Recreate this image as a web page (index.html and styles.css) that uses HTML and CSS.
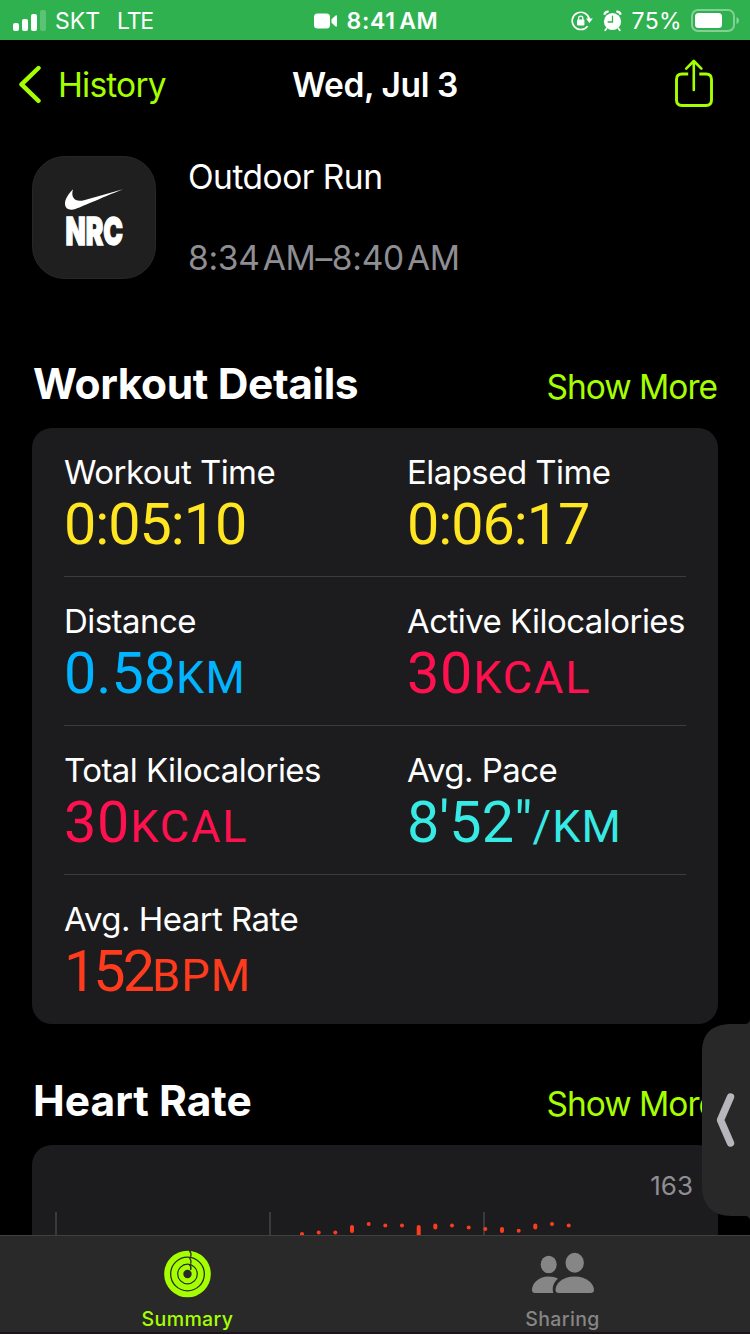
FILE: index.html
```html
<!DOCTYPE html>
<html lang="en">
<head>
  <meta charset="UTF-8">
  <meta name="viewport" content="width=device-width, initial-scale=1.0">
  <title>Workout Summary</title>
  <link rel="stylesheet" href="styles.css">
</head>
<body>
  <div class="status-bar">
    <div class="status-left">
      <svg class="signal" width="34" height="22" viewBox="0 0 34 22" fill="#fff">
        <rect x="0" y="13" width="6" height="8" rx="2"/>
        <rect x="9" y="9" width="6" height="12" rx="2"/>
        <rect x="18" y="4" width="6" height="17" rx="2"/>
        <rect x="27" y="0" width="6" height="21" rx="2" opacity="0.22"/>
      </svg>
      <span class="carrier">SKT</span>
      <span class="network">LTE</span>
    </div>
    <div class="status-center">
      <svg width="24" height="16" viewBox="0 0 24 16" fill="#fff">
        <rect x="0" y="0.5" width="16" height="15" rx="3.5"/>
        <path d="M17.5 6.2 L21.6 2.6 Q23 1.6 23 3.4 V12.6 Q23 14.4 21.6 13.4 L17.5 9.8 Z"/>
      </svg>
      <span class="clock">8:41 AM</span>
    </div>
    <div class="status-right">
      <svg class="lock" width="22" height="22" viewBox="0 0 22 22" fill="none">
        <path d="M18.3 9.4 A8.6 8.6 0 1 0 16.6 16.2" stroke="#fff" stroke-width="1.7"/>
        <path d="M15 8.6 H21.8 L18.4 12.9 Z" fill="#fff"/>
        <rect x="6" y="9.6" width="7.4" height="6" rx="1" fill="#fff"/>
        <path d="M7.6 10 V8.2 a2.1 2.1 0 0 1 4.2 0 V10" stroke="#fff" stroke-width="1.3"/>
      </svg>
      <svg class="alarm" width="20" height="22" viewBox="0 0 20 22">
        <circle cx="9.5" cy="11.5" r="8.6" fill="#fff"/>
        <path d="M1.6 4.8 A3 3 0 0 1 5.6 1.9" stroke="#fff" stroke-width="2.4" fill="none"/>
        <path d="M13.4 1.9 A3 3 0 0 1 17.4 4.8" stroke="#fff" stroke-width="2.4" fill="none"/>
        <path d="M3.5 18.5 L2.2 20.2 M15.5 18.5 L16.8 20.2" stroke="#fff" stroke-width="1.8" stroke-linecap="round"/>
        <path d="M9.5 6.2 V12 H5.2" stroke="#2fb14f" stroke-width="1.3" fill="none" stroke-linecap="round"/>
      </svg>
      <span class="percent">75%</span>
      <svg class="battery" width="49" height="24" viewBox="0 0 49 24">
        <rect x="1" y="1" width="42" height="21" rx="6" fill="none" stroke="#fff" stroke-width="2" opacity="0.4"/>
        <rect x="4" y="4" width="27" height="15" rx="3.5" fill="#fff"/>
        <path d="M45.5 8 Q48 9 48 11.5 Q48 14 45.5 15 Z" fill="#fff" opacity="0.45"/>
      </svg>
    </div>
  </div>

  <div class="nav">
    <div class="back">
      <svg width="23" height="39" viewBox="0 0 23 39" fill="none" stroke="#a6ff00" stroke-width="4.4" stroke-linecap="round" stroke-linejoin="round">
        <path d="M20.5 3 L3.5 19.4 L20.5 35.8"/>
      </svg>
      <span>History</span>
    </div>
    <h1>Wed, Jul 3</h1>
    <svg class="share" width="38" height="49" viewBox="0 0 38 49" fill="none" stroke="#a6ff00" stroke-width="2.9">
      <path d="M13.2 15 H7 Q1.5 15 1.5 20.5 V41 Q1.5 46.5 7 46.5 H31 Q36.5 46.5 36.5 41 V20.5 Q36.5 15 31 15 H24.3"/>
      <path d="M18.8 31 V2.2 M11.2 9.6 L18.8 2 L26.4 9.6" stroke-width="2.6" stroke-linecap="round" stroke-linejoin="round"/>
    </svg>
  </div>

  <div class="workout">
    <svg class="app-icon" width="124" height="123" viewBox="0 0 124 123">
      <rect x="0.5" y="0.5" width="123" height="122" rx="32" fill="#1f1f1f" stroke="#272727"/>
      <path d="M41 33.3 C36.5 38 33 43 33 47.5 C33 53 37.5 54.8 43.5 53 C48 51.6 68 42.5 91 33.3 L52 44.2 C43 46.5 38.5 41.5 41 33.3 Z" fill="#fff"/>
      <text class="app-name" x="33.5" y="89.3" textLength="57.5" lengthAdjust="spacingAndGlyphs">NRC</text>
    </svg>
    <div class="workout-info">
      <div class="workout-name">Outdoor Run</div>
      <div class="workout-time">8:34 AM–8:40 AM</div>
    </div>
  </div>

  <div class="section-head">
    <h2>Workout Details</h2>
    <a class="show-more">Show More</a>
  </div>
  <div class="card details">
    <div class="row">
      <div class="stat">
        <div class="label">Workout Time</div>
        <div class="value yellow">0:05:10</div>
      </div>
      <div class="stat">
        <div class="label">Elapsed Time</div>
        <div class="value yellow">0:06:17</div>
      </div>
    </div>
    <div class="row">
      <div class="stat">
        <div class="label">Distance</div>
        <div class="value blue">0.58<span class="unit">KM</span></div>
      </div>
      <div class="stat">
        <div class="label">Active Kilocalories</div>
        <div class="value pink">30<span class="unit">KCAL</span></div>
      </div>
    </div>
    <div class="row">
      <div class="stat">
        <div class="label">Total Kilocalories</div>
        <div class="value pink">30<span class="unit">KCAL</span></div>
      </div>
      <div class="stat">
        <div class="label">Avg. Pace</div>
        <div class="value cyan">8'52"<span class="unit">/KM</span></div>
      </div>
    </div>
    <div class="row">
      <div class="stat">
        <div class="label">Avg. Heart Rate</div>
        <div class="value red">152<span class="unit">BPM</span></div>
      </div>
    </div>
  </div>

  <div class="section-head second">
    <h2>Heart Rate</h2>
    <a class="show-more">Show More</a>
  </div>
  <div class="card chart">
    <div class="chart-max">163</div>
    <svg width="686" height="24" viewBox="0 0 686 24">
      <g fill="#3a3a3c">
        <rect x="23" y="0" width="2" height="24"/>
        <rect x="237" y="0" width="2" height="24"/>
        <rect x="451" y="0" width="2" height="24"/>
      </g>
      <g fill="#ff3b1d">
        <rect x="268" y="20" width="4" height="6" rx="2"/>
        <rect x="284.7" y="18.5" width="4" height="4" rx="2"/>
        <rect x="301.3" y="18.5" width="4" height="4" rx="2"/>
        <rect x="318" y="13" width="4" height="8" rx="2"/>
        <rect x="334.7" y="10" width="4" height="4" rx="2"/>
        <rect x="351.3" y="11.6" width="4" height="4" rx="2"/>
        <rect x="368" y="11.6" width="4" height="4" rx="2"/>
        <rect x="384.7" y="13" width="4" height="14" rx="2"/>
        <rect x="401.3" y="11.6" width="4" height="6" rx="2"/>
        <rect x="418" y="11.6" width="4" height="4" rx="2"/>
        <rect x="434.7" y="13.4" width="4" height="4" rx="2"/>
        <rect x="451.3" y="15" width="4" height="4" rx="2"/>
        <rect x="468" y="15" width="4" height="6" rx="2"/>
        <rect x="484.7" y="16.7" width="4" height="4" rx="2"/>
        <rect x="501.3" y="11.6" width="4" height="6" rx="2"/>
        <rect x="518" y="10" width="4" height="4" rx="2"/>
        <rect x="534.7" y="11.6" width="4" height="4" rx="2"/>
      </g>
    </svg>
  </div>

  <div class="tab-bar">
    <div class="tab active">
      <svg width="48" height="48" viewBox="0 0 48 48" fill="none" stroke="#a6ff00">
        <circle cx="23.5" cy="24" r="20.4" stroke-width="5.8"/>
        <circle cx="23.5" cy="24" r="13.3" stroke-width="5.8"/>
        <circle cx="23.5" cy="24" r="6.7" stroke-width="5"/>
        <path d="M25.5 0.5 Q27.8 3.5 26.6 6.8 M25.5 7.8 Q27.8 10.5 26.6 13.8 M25.5 14.8 Q27.8 17 26.6 20" stroke="#2a2a2a" stroke-width="1.3"/>
      </svg>
      <span>Summary</span>
    </div>
    <div class="tab">
      <svg width="64" height="48" viewBox="0 0 64 48" fill="#868686">
        <ellipse cx="17.7" cy="14.5" rx="8" ry="8.8"/>
        <ellipse cx="43.7" cy="12.7" rx="9.2" ry="10"/>
        <path d="M27 28.5 C23.5 31.5 21.7 35.5 21.7 39 Q21.7 41 22.3 43 H4 Q1 43 1 40 C1 34 7 26.5 17.5 26.5 C21 26.5 24.5 27.2 27 28.5 Z"/>
        <path d="M28 43 Q24.5 43 24.5 40 C24.5 34 31 26.5 43.7 26.5 C56 26.5 63 34 63 40 Q63 43 59.5 43 Z"/>
      </svg>
      <span>Sharing</span>
    </div>
  </div>

  <svg class="side-handle" width="48" height="200" viewBox="0 0 48 200">
    <path d="M48 0 Q47 4 43 4 H30 C10 4 0 13 0 33 V165 C0 185 10 196 30 196 H43 Q47 196 48 200 Z" fill="#282828"/>
    <path d="M28.5 77 L18.5 100 L28.5 123" fill="none" stroke="#b7b6bc" stroke-width="7.4" stroke-linecap="round" stroke-linejoin="round"/>
  </svg>
</body>
</html>
```
FILE: styles.css
```css
:root {
  --lime: #a6ff00;
  --card: #1c1c1e;
  --line: #3c3c3e;
  --gray: #8e8e93;
}

* {
  box-sizing: border-box;
  margin: 0;
  padding: 0;
}

body {
  position: relative;
  width: 750px;
  height: 1334px;
  overflow: hidden;
  display: flex;
  flex-direction: column;
  background: #000;
  color: #fff;
  font-family: Inter, "Liberation Sans", sans-serif;
  white-space: nowrap;
}

svg {
  display: block;
  flex: none;
}

/* status bar */
.status-bar {
  display: grid;
  grid-template-columns: 1fr auto 1fr;
  align-items: center;
  flex: none;
  height: 40px;
  padding: 1px 10px 0 13px;
  background: #2fb14f;
  font-size: 23px;
}

.status-left,
.status-center,
.status-right {
  display: flex;
  align-items: center;
}

.status-right {
  justify-content: flex-end;
}

.carrier {
  margin-left: 8px;
}

.network {
  margin-left: 17px;
  letter-spacing: -1.2px;
}

.clock {
  margin-left: 8px;
  font-weight: 600;
  letter-spacing: 0.7px;
  word-spacing: -3px;
}

.alarm {
  margin-left: 10px;
}

.percent {
  margin: 0 9px 0 8px;
  letter-spacing: 0.4px;
}

/* navigation */
.nav {
  display: grid;
  grid-template-columns: 1fr auto 1fr;
  align-items: center;
  flex: none;
  height: 89px;
  padding: 0 18px;
  font-size: 33.5px;
  letter-spacing: -0.8px;
}

.back {
  display: flex;
  align-items: center;
  gap: 17px;
  color: var(--lime);
}

.nav h1 {
  font-size: 33.5px;
  font-weight: 600;
  letter-spacing: -0.4px;
}

.share {
  justify-self: end;
  margin-right: 19px;
  margin-bottom: 2px;
}

/* workout summary */
.workout {
  display: flex;
  flex: none;
  gap: 32px;
  height: 123px;
  margin: 27px 32px 0;
}

.app-name {
  font-size: 39px;
  font-weight: 900;
  fill: #fff;
  stroke: #fff;
  stroke-width: 1.4px;
}

.workout-info {
  padding-top: 1px;
  font-size: 33.5px;
  line-height: 40px;
  letter-spacing: -0.5px;
}

.workout-time {
  margin-top: 41px;
  color: var(--gray);
  letter-spacing: -0.3px;
  word-spacing: -6px;
}

/* sections */
.section-head {
  display: flex;
  align-items: baseline;
  justify-content: space-between;
  flex: none;
  height: 72px;
  margin: 77px 33px 0;
}

.section-head.second {
  margin-top: 49px;
}

.section-head h2 {
  font-size: 42.5px;
  font-weight: 700;
  line-height: 56px;
  letter-spacing: -0.4px;
}

.section-head.second h2 {
  letter-spacing: 0;
}

.show-more {
  color: var(--lime);
  font-size: 33.5px;
  letter-spacing: -1px;
}

.card {
  flex: none;
  background: var(--card);
  border-radius: 20px;
}

.details {
  height: 596px;
  margin: 0 32px;
  padding: 0 32px;
}

.row {
  display: grid;
  grid-template-columns: 343px 1fr;
  height: 149px;
  padding-top: 24px;
  border-bottom: 1px solid var(--line);
}

.row:last-child {
  border-bottom: none;
}

.label {
  font-size: 33px;
  line-height: 40px;
  letter-spacing: -0.55px;
}

.value {
  font-family: Roboto, Inter, sans-serif;
  font-size: 57.5px;
  line-height: 66px;
}

.unit {
  font-size: 45px;
  letter-spacing: 1.2px;
}

.yellow {
  color: #ffe620;
  letter-spacing: -1px;
}

.blue {
  color: #00b4ff;
}

.pink {
  color: #ff1150;
  letter-spacing: 0.8px;
}

.pink .unit {
  letter-spacing: 1.9px;
}

.cyan {
  color: #38eae4;
}

.red {
  color: #ff3b1d;
  letter-spacing: -3px;
}

/* heart rate chart */
.chart {
  height: 110px;
  margin: 0 32px;
  overflow: hidden;
  border-radius: 20px 20px 0 0;
}

.chart-max {
  height: 67px;
  padding: 25px 25px 0;
  color: var(--gray);
  font-size: 26px;
  line-height: 32px;
  text-align: right;
}

/* tab bar */
.tab-bar {
  position: absolute;
  left: 0;
  right: 0;
  bottom: 0;
  display: grid;
  grid-template-columns: 1fr 1fr;
  height: 99px;
  border-top: 1px solid #404041;
  border-bottom: 2px solid #1c1418;
  background: #292929;
}

.tab {
  display: flex;
  flex-direction: column;
  align-items: center;
  padding-top: 14px;
  color: #868686;
  font-size: 19.5px;
  font-weight: 500;
  line-height: 24px;
  letter-spacing: 0.4px;
}

.tab span {
  margin-top: 9px;
}

.tab.active {
  color: var(--lime);
}

.side-handle {
  position: absolute;
  top: 1020px;
  right: 0;
}
```
